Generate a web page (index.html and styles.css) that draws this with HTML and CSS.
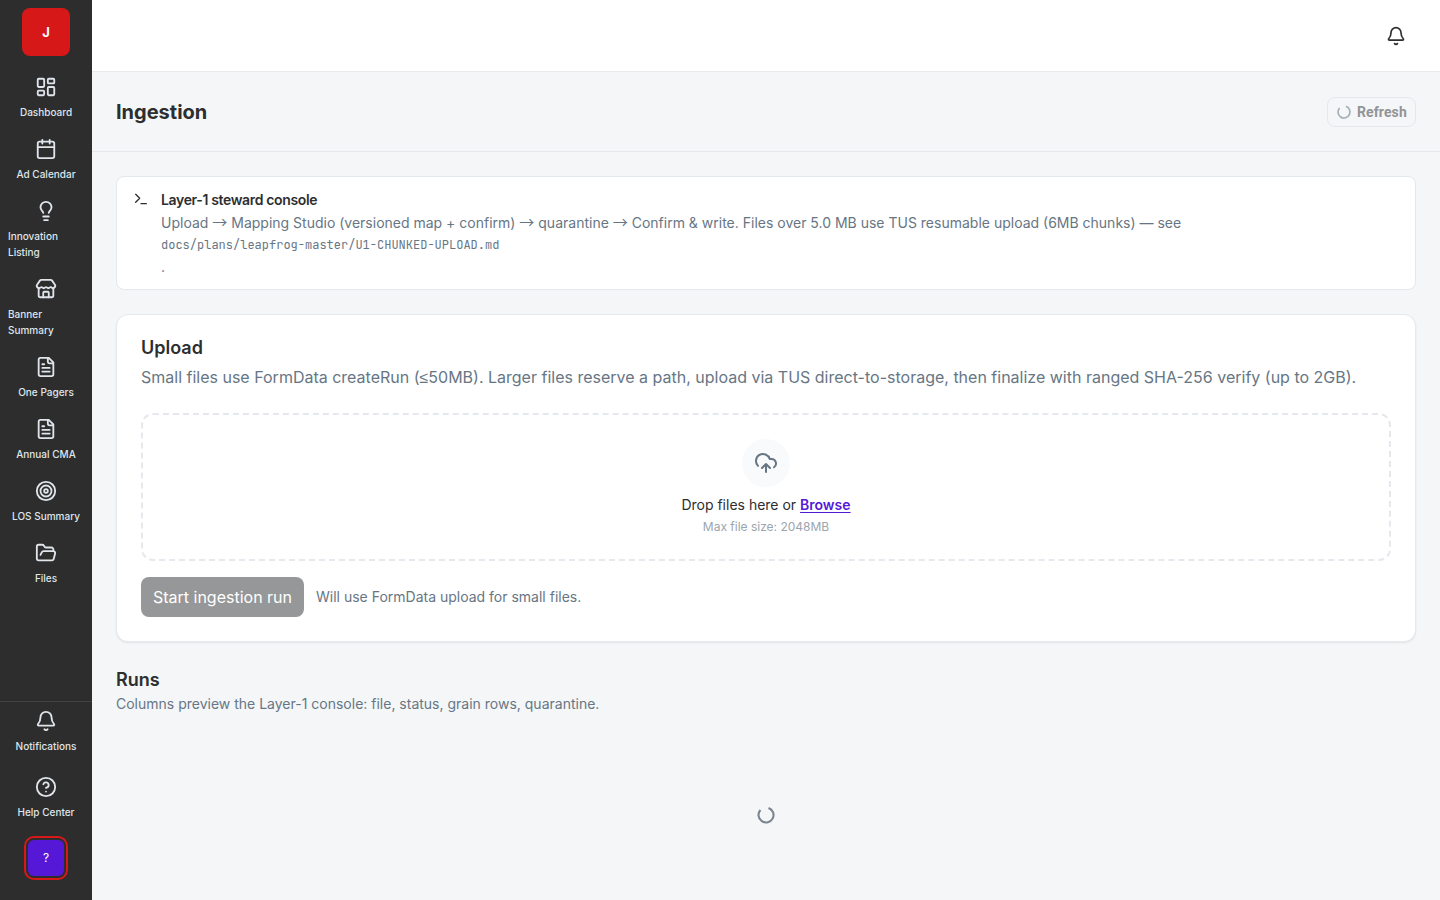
FILE: index.html
```html
<!DOCTYPE html>
<html lang="en">
<head>
<meta charset="utf-8">
<title>Ingestion</title>
<link rel="stylesheet" href="styles.css">
</head>
<body>
<div class="app">
  <aside class="sidebar">
    <div class="logo">J</div>
    <nav class="nav">
      <a class="nav-item"><svg class="icon" viewBox="0 0 24 24"><rect x="3" y="3" width="7" height="9" rx="1"/><rect x="14" y="3" width="7" height="5" rx="1"/><rect x="14" y="12" width="7" height="9" rx="1"/><rect x="3" y="16" width="7" height="5" rx="1"/></svg><span>Dashboard</span></a>
      <a class="nav-item"><svg class="icon" viewBox="0 0 24 24"><path d="M8 2v4M16 2v4M3 10h18"/><rect x="3" y="4" width="18" height="18" rx="2"/></svg><span>Ad Calendar</span></a>
      <a class="nav-item"><svg class="icon" viewBox="0 0 24 24"><path d="M15 14c.2-1 .7-1.7 1.5-2.5 1-.9 1.5-2.2 1.5-3.5A6 6 0 0 0 6 8c0 1 .2 2.2 1.5 3.5.7.7 1.3 1.5 1.5 2.5M9 18h6M10 22h4"/></svg><span>Innovation Listing</span></a>
      <a class="nav-item"><svg class="icon" viewBox="0 0 24 24"><path d="M15 21v-5a1 1 0 0 0-1-1h-4a1 1 0 0 0-1 1v5"/><path d="M17.774 10.31a1.12 1.12 0 0 0-1.549 0 2.5 2.5 0 0 1-3.451 0 1.12 1.12 0 0 0-1.548 0 2.5 2.5 0 0 1-3.452 0 1.12 1.12 0 0 0-1.549 0 2.5 2.5 0 0 1-3.77-3.248l2.889-4.184A2 2 0 0 1 7 2h10a2 2 0 0 1 1.653.873l2.895 4.192a2.5 2.5 0 0 1-3.774 3.244"/><path d="M4 10.95V19a2 2 0 0 0 2 2h12a2 2 0 0 0 2-2v-8.05"/></svg><span>Banner Summary</span></a>
      <a class="nav-item"><svg class="icon" viewBox="0 0 24 24"><path d="M15 2H6a2 2 0 0 0-2 2v16a2 2 0 0 0 2 2h12a2 2 0 0 0 2-2V7ZM14 2v4a2 2 0 0 0 2 2h4M10 9H8M16 13H8M16 17H8"/></svg><span>One Pagers</span></a>
      <a class="nav-item"><svg class="icon" viewBox="0 0 24 24"><path d="M15 2H6a2 2 0 0 0-2 2v16a2 2 0 0 0 2 2h12a2 2 0 0 0 2-2V7ZM14 2v4a2 2 0 0 0 2 2h4M10 9H8M16 13H8M16 17H8"/></svg><span>Annual CMA</span></a>
      <a class="nav-item"><svg class="icon" viewBox="0 0 24 24"><circle cx="12" cy="12" r="10"/><circle cx="12" cy="12" r="6"/><circle cx="12" cy="12" r="2"/></svg><span>LOS Summary</span></a>
      <a class="nav-item"><svg class="icon" viewBox="0 0 24 24"><path d="m6 14 1.5-2.9A2 2 0 0 1 9.24 10H20a2 2 0 0 1 1.94 2.5l-1.54 6a2 2 0 0 1-1.95 1.5H4a2 2 0 0 1-2-2V5a2 2 0 0 1 2-2h3.9a2 2 0 0 1 1.69.9l.81 1.2a2 2 0 0 0 1.67.9H18a2 2 0 0 1 2 2v2"/></svg><span>Files</span></a>
    </nav>
    <div class="side-foot">
      <a class="nav-item"><svg class="icon" viewBox="0 0 24 24"><path d="M10.27 21a2 2 0 0 0 3.46 0M3.26 15.33A1 1 0 0 0 4 17h16a1 1 0 0 0 .74-1.67C19.41 13.96 18 12.5 18 8A6 6 0 0 0 6 8c0 4.5-1.41 5.96-2.74 7.33"/></svg><span>Notifications</span></a>
      <a class="nav-item"><svg class="icon" viewBox="0 0 24 24"><circle cx="12" cy="12" r="10"/><path d="M9.09 9a3 3 0 0 1 5.83 1c0 2-3 3-3 3M12 17h.01"/></svg><span>Help Center</span></a>
      <div class="avatar"><span>?</span></div>
    </div>
  </aside>
  <div class="content">
    <header class="topbar"><svg class="icon" viewBox="0 0 24 24"><path d="M10.27 21a2 2 0 0 0 3.46 0M3.26 15.33A1 1 0 0 0 4 17h16a1 1 0 0 0 .74-1.67C19.41 13.96 18 12.5 18 8A6 6 0 0 0 6 8c0 4.5-1.41 5.96-2.74 7.33"/></svg></header>
    <div class="titlebar">
      <h1>Ingestion</h1>
      <button class="refresh" disabled><svg class="icon loader" viewBox="0 0 24 24"><path d="M15 3.5A9 9 0 1 1 5.3 6"/></svg>Refresh</button>
    </div>
    <main class="main">
      <section class="notice">
        <svg class="icon" viewBox="0 0 24 24"><path d="m4 17 6-6-6-6M12 19h8"/></svg>
        <div>
          <h2 class="notice-title">Layer-1 steward console</h2>
          <div class="notice-text">Upload <span class="arrow">→</span> Mapping Studio (versioned map + confirm) <span class="arrow">→</span> quarantine <span class="arrow">→</span> Confirm &amp; write. Files over 5.0 MB use TUS resumable upload (6MB chunks) — see <code>docs/plans/leapfrog-master/U1-CHUNKED-UPLOAD.md</code><span>.</span></div>
        </div>
      </section>
      <section class="card">
        <h2>Upload</h2>
        <p class="lead">Small files use FormData createRun (<span class="sym">≤</span>50MB). Larger files reserve a path, upload via TUS direct-to-storage, then finalize with ranged SHA-256 verify (up to 2GB).</p>
        <div class="drop">
          <div class="cloud"><svg class="icon" viewBox="0 0 24 24"><path d="M12 13v8M4 14.9A7 7 0 1 1 15.71 8h1.79a4.5 4.5 0 0 1 2.5 8.24M8 17l4-4 4 4"/></svg></div>
          <div class="drop-text">Drop files here or <a>Browse</a></div>
          <div class="drop-hint">Max file size: 2048MB</div>
        </div>
        <div class="actions"><button class="start" disabled>Start ingestion run</button><span class="hint">Will use FormData upload for small files.</span></div>
      </section>
      <section class="runs">
        <h2>Runs</h2>
        <p>Columns preview the Layer-1 console: file, status, grain rows, quarantine.</p>
        <div class="loading"><svg class="icon loader" viewBox="0 0 24 24"><path d="M15 3.5A9 9 0 1 1 5.3 6"/></svg></div>
      </section>
    </main>
  </div>
</div>
</body>
</html>
```
FILE: styles.css
```css
* { box-sizing: border-box; }
body { margin: 0; font-family: Inter, sans-serif; color: #2d2e2f; background: #f4f6f8; }
h1, h2, p { margin: 0; font-weight: 600; }
.icon { display: block; flex: none; width: 20px; height: 20px; fill: none; stroke: currentColor; stroke-width: 2; stroke-linecap: round; stroke-linejoin: round; }
.icon.loader { stroke-width: 2.5; stroke-linecap: butt; }
.sym { font-family: "Liberation Sans", sans-serif; line-height: 1; }
.arrow { font: 15px/1 "Noto Sans CJK SC", sans-serif; }
.app { display: flex; height: 900px; overflow: hidden; }
.sidebar { width: 92px; flex: none; background: #2d2d2d; color: #dfe5eb; display: flex; flex-direction: column; align-items: center; padding-top: 8px; }
.logo { width: 48px; height: 48px; border-radius: 8px; background: #d61818; color: #fff; font-size: 13px; font-weight: 700; display: flex; align-items: center; justify-content: center; }
.nav { flex: 1; width: 100%; padding-top: 20px; display: flex; flex-direction: column; gap: 18px; }
.nav-item { display: flex; flex-direction: column; align-items: center; gap: 6px; padding: 0 8px; font-size: 10px; line-height: 16px; font-weight: 500; }
.nav-item .icon { width: 22px; height: 22px; }
.side-foot { width: 100%; height: 199px; border-top: 1px solid #424242; padding-top: 8px; display: flex; flex-direction: column; align-items: center; gap: 22px; }
.avatar { margin-top: -6px; width: 44px; height: 44px; border: 2px solid #d61818; border-radius: 10px; padding: 2px; display: flex; }
.avatar span { flex: 1; padding-bottom: 2px; border-radius: 6px; background: #5518d6; color: #fff; font-size: 12px; display: flex; align-items: center; justify-content: center; }
.content { flex: 1; min-width: 0; }
.topbar { height: 72px; background: #fff; border-bottom: 1px solid #e8ebee; display: flex; align-items: center; justify-content: flex-end; padding-right: 34px; }
.titlebar { height: 80px; border-bottom: 1px solid #e5e8eb; display: flex; align-items: center; justify-content: space-between; padding: 0 24px; }
h1 { font-size: 20px; line-height: 28px; font-weight: 700; }
.refresh { height: 30px; width: 89px; padding: 0 8px; display: flex; align-items: center; gap: 5px; border: 1px solid #e5e8eb; border-radius: 8px; background: transparent; color: #929496; font: 700 14px Roboto, sans-serif; letter-spacing: .1px; }
.refresh .icon { width: 16px; height: 16px; color: #a4adb5; }
.main { padding: 24px; }
.notice { height: 114px; padding: 12px 16px; display: flex; gap: 12px; background: #fff; border: 1px solid #e3e8ed; border-radius: 8px; }
.notice > .icon { width: 16px; height: 16px; margin-top: 2px; }
.notice-title { font-size: 14px; line-height: 22px; letter-spacing: -.35px; }
.notice-text { font-size: 14px; line-height: 23px; color: #677684; }
.notice-text code { display: block; padding-top: 1px; font: 12px/20px "JetBrains Mono", "Liberation Mono", monospace; }
.card { height: 328px; margin-top: 24px; padding: 20px 24px; background: #fff; border: 1px solid #e6e9ed; border-radius: 12px; box-shadow: 0 1px 2px rgba(0,0,0,.08); }
.card h2, .runs h2 { font-size: 18px; line-height: 26px; }
.lead { font-size: 16px; line-height: 24px; font-weight: 400; color: #677684; margin-top: 4px; white-space: nowrap; }
.drop { margin-top: 24px; height: 148px; border: 2px dashed #e5e9ee; border-radius: 12px; padding-top: 24px; display: flex; flex-direction: column; align-items: center; }
.cloud { width: 48px; height: 48px; border-radius: 50%; background: #f9fafb; color: #677684; display: flex; align-items: center; justify-content: center; }
.cloud .icon { width: 24px; height: 24px; }
.drop-text { margin-top: 8px; font-size: 14px; line-height: 20px; }
.drop-text a { color: #5518d6; font-weight: 600; text-decoration: underline; text-underline-offset: 2px; }
.drop-hint { margin-top: 4px; font-size: 12px; line-height: 16px; color: #9ba5ae; }
.actions { margin-top: 16px; display: flex; align-items: center; gap: 12px; font-size: 14px; line-height: 20px; color: #677684; }
.start { width: 163px; height: 40px; padding: 0; border: 0; border-radius: 8px; background: #969798; color: #fff; font: 16px Inter, sans-serif; white-space: nowrap; }
.runs { padding-top: 25px; }
.runs p { font-size: 14px; line-height: 20px; font-weight: 400; color: #677684; margin-top: 1px; }
.loading { display: flex; justify-content: center; padding-top: 91px; color: #7b8590; }
```
